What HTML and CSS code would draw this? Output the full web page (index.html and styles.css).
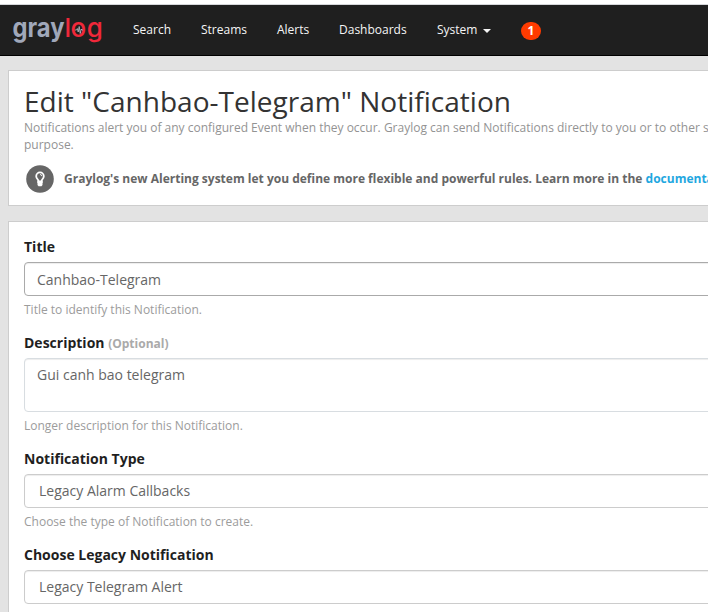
FILE: index.html
```html
<!DOCTYPE html>
<html lang="en">
<head>
<meta charset="utf-8">
<title>Graylog - Edit Notification</title>
<link rel="stylesheet" href="styles.css">
</head>
<body>
<nav class="navbar">
  <a class="brand">
    <svg width="94" height="34" viewBox="0 0 94 34">
      <text class="brand-text" x="0.500" y="23.500" textLength="52" lengthAdjust="spacingAndGlyphs">gray</text>
      <text class="brand-text brand-log" x="52.500 58.600 74.800" y="23.500">log</text>
      <path class="brand-pulse" d="M63 17h1.500l.8-1.500.9 3.500 1-5.500 1 7 1-4.500.6 1h1.200"/>
    </svg>
  </a>
  <a class="nav-search">Search</a>
  <a class="nav-streams">Streams</a>
  <a class="nav-alerts">Alerts</a>
  <a class="nav-dashboards">Dashboards</a>
  <a class="nav-system">System<span class="caret"></span></a>
  <span class="badge">1</span>
</nav>
<main class="content">
  <header class="card page-header">
    <h1>Edit "Canhbao-Telegram" Notification</h1>
    <p class="description">Notifications alert you of any configured Event when they occur. Graylog can send Notifications directly to you or to other systems you use for that<br>purpose.</p>
    <div class="hint">
      <svg width="28" height="28" viewBox="0 0 28 28">
        <circle cx="14" cy="14" r="13.800" fill="#666"/>
        <path d="M12.300 17v-1.500c0-1-2.100-2-2.100-4.300a3.800 3.800 0 0 1 7.600 0c0 2.300-2.100 3.300-2.100 4.300V17z" fill="none" stroke="#fff" stroke-width="1.800"/>
        <path d="M11.500 15.500h5v4.500l-1 1.200h-3l-1-1.200z" fill="#fff"/>
        <path d="M14 9.500q1.800 0 1.800 1.600" fill="none" stroke="#fff" stroke-width=".9"/>
      </svg>
      <p>Graylog's new Alerting system let you define more flexible and powerful rules. Learn more in the <a>documentation</a></p>
    </div>
  </header>
  <form class="card">
    <div class="group">
      <label>Title</label>
      <div class="field focused">Canhbao-Telegram</div>
      <p class="help">Title to identify this Notification.</p>
    </div>
    <div class="group">
      <label>Description <small>(Optional)</small></label>
      <div class="field area">Gui canh bao telegram</div>
      <p class="help">Longer description for this Notification.</p>
    </div>
    <div class="group">
      <label>Notification Type</label>
      <div class="field select">Legacy Alarm Callbacks</div>
      <p class="help">Choose the type of Notification to create.</p>
    </div>
    <div class="group">
      <label>Choose Legacy Notification</label>
      <div class="field select">Legacy Telegram Alert</div>
    </div>
  </form>
</main>
</body>
</html>
```
FILE: styles.css
```css
* { box-sizing: border-box; }
html, body { height: 100%; overflow: hidden; }
body {
  margin: 0;
  padding-top: 4px;
  background: #fff;
  color: #1f1f1f;
  font: 14px/20px "Open Sans", sans-serif;
}
p, h1 { margin: 0; }
.navbar {
  display: flex;
  align-items: center;
  height: 52px;
  background: #1f1f1f;
  border-top: 1px solid #d5d7da;
  border-bottom: 1px solid #000;
  padding-left: 12px;
  color: #f5f5f5;
  font-size: 12px;
  white-space: nowrap;
}
.brand { width: 94px; height: 34px; margin-right: 27px; }
.brand svg { display: block; overflow: visible; }
.brand-text { font: 700 26px Inter, sans-serif; fill: #a0a8ba; }
.brand-log { font-weight: 500; fill: #f0283a; }
.brand-pulse { fill: none; stroke: #cdd2dc; stroke-width: .7px; }
.nav-search { width: 68px; }
.nav-streams { width: 76px; }
.nav-alerts { width: 62px; }
.nav-dashboards { width: 98px; }
.nav-system { display: flex; align-items: center; width: 84px; }
.caret {
  margin: 2px 0 0 6px;
  border-top: 4px solid #f5f5f5;
  border-left: 4px solid transparent;
  border-right: 4px solid transparent;
}
.badge {
  width: 20px;
  height: 18px;
  margin-top: 2px;
  border-radius: 9px;
  background: #ff3b00;
  color: #fff;
  font-weight: 700;
  line-height: 17px;
  text-align: center;
}
.content {
  display: flex;
  flex-direction: column;
  gap: 15px;
  width: 900px;
  min-height: 556px;
  padding: 14px 8px 0;
  background: #e3e3e3;
}
.card { padding: 15px; border: 1px solid #cdcdcd; background: #fff; }
.page-header { height: 136px; }
h1 { font-size: 28px; font-weight: 400; line-height: 31px; color: #333; letter-spacing: .02px; }
.description {
  margin-top: 2px;
  color: #939393;
  font-size: 12px;
  line-height: 17px;
  white-space: nowrap;
}
.hint {
  display: flex;
  align-items: center;
  gap: 10px;
  margin: 12px 0 0 2px;
  color: #666;
  font-size: 12px;
  font-weight: 700;
  white-space: nowrap;
}
.hint p { margin-top: -1px; }
.hint a { color: #1fa7e0; }
form.card { height: 420px; }
.group { margin-bottom: 15px; }
label { display: block; height: 20px; margin-bottom: 5px; font-weight: 700; }
label small { color: #aaa; font-size: 12px; line-height: 1; }
.field {
  height: 34px;
  padding: 6px 12px;
  border: 1px solid #ccc;
  border-radius: 4px;
  box-shadow: inset 0 1px 1px rgba(0, 0, 0, .075);
  color: #666;
}
.focused { padding-top: 7px; border-color: #aaa; }
.area { height: 54px; border-color: #d8dde1; }
.select { padding-left: 14px; }
.help { margin-top: 5px; color: #9c9c9c; font-size: 12px; line-height: 17px; }
```
